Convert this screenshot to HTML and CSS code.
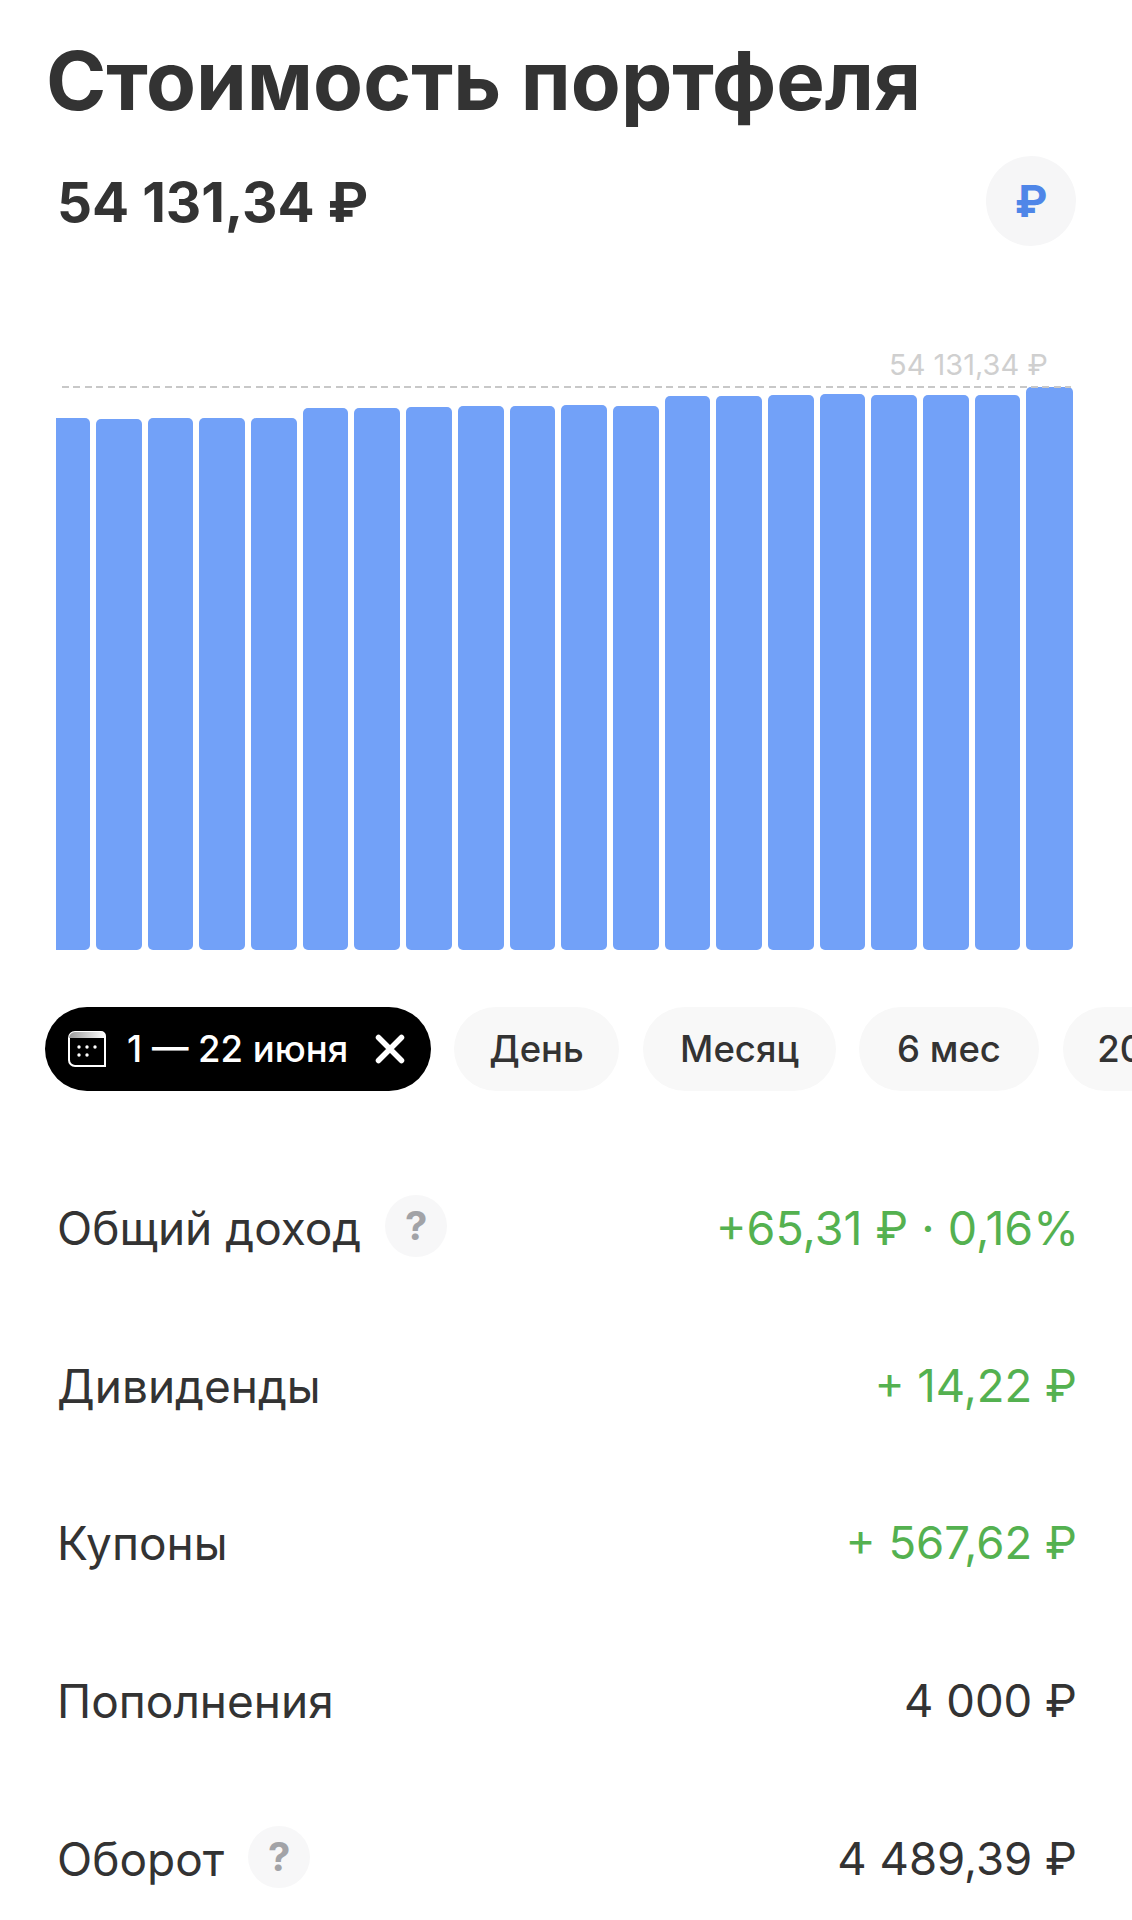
FILE: index.html
```html
<!DOCTYPE html>
<html lang="ru">
<head>
<meta charset="utf-8">
<title>Стоимость портфеля</title>
<link rel="stylesheet" href="styles.css">
</head>
<body>
<main class="page">
  <h1 class="title">Стоимость портфеля</h1>
  <div class="summary">
    <div class="amount">54 131,34 ₽</div>
    <div class="currency">₽</div>
  </div>
  <section class="chart">
    <div class="peak-label">54 131,34 ₽</div>
    <div class="peak-line"></div>
    <div class="bars">
      <div class="bar bar-first" style="height:532px"></div>
      <div class="bar" style="height:531px"></div>
      <div class="bar" style="height:532px"></div>
      <div class="bar" style="height:532px"></div>
      <div class="bar" style="height:532px"></div>
      <div class="bar" style="height:542px"></div>
      <div class="bar" style="height:542px"></div>
      <div class="bar" style="height:543px"></div>
      <div class="bar" style="height:544px"></div>
      <div class="bar" style="height:544px"></div>
      <div class="bar" style="height:545px"></div>
      <div class="bar" style="height:544px"></div>
      <div class="bar" style="height:554px"></div>
      <div class="bar" style="height:554px"></div>
      <div class="bar" style="height:555px"></div>
      <div class="bar" style="height:556px"></div>
      <div class="bar" style="height:555px"></div>
      <div class="bar" style="height:555px"></div>
      <div class="bar" style="height:555px"></div>
      <div class="bar bar-last" style="height:563px"></div>
    </div>
  </section>
  <nav class="chips">
    <div class="chip chip-active">
      <svg class="cal-icon" viewBox="0 0 38 36" aria-hidden="true">
        <defs>
          <linearGradient id="calTop" x1="0" y1="0" x2="1" y2="0">
            <stop offset="0" stop-color="#9a9a9a"/>
            <stop offset="1" stop-color="#ffffff"/>
          </linearGradient>
        </defs>
        <path d="M1 7V29a6 6 0 0 0 6 6H37V5a4 4 0 0 0-4-4H7A6 6 0 0 0 1 7Z" fill="#000" stroke="#fff" stroke-width="2"/>
        <path d="M1 7a6 6 0 0 1 6-6H33a4 4 0 0 1 4 4V7Z" fill="url(#calTop)"/>
        <g fill="#fff">
          <circle cx="11" cy="16" r="1.7"/><circle cx="19" cy="16" r="1.7"/><circle cx="27" cy="16" r="1.7"/>
          <circle cx="11" cy="24" r="1.7"/><circle cx="19" cy="24" r="1.7"/>
        </g>
      </svg>
      <span class="chip-label">1 — 22 июня</span>
      <svg class="close-icon" viewBox="0 0 30 30" aria-hidden="true">
        <path d="M3.5 3.5 26.5 26.5M26.5 3.5 3.5 26.5" stroke="#fff" stroke-width="5.5" stroke-linecap="round"/>
      </svg>
    </div>
    <div class="chip chip-day">День</div>
    <div class="chip chip-month">Месяц</div>
    <div class="chip chip-half">6 мес</div>
    <div class="chip chip-year">2023</div>
  </nav>
  <section class="rows">
    <div class="row">
      <div class="row-name">Общий доход <span class="hint">?</span></div>
      <div class="row-value positive row-value-wide">+65,31 ₽ · 0,16%</div>
    </div>
    <div class="row">
      <div class="row-name">Дивиденды</div>
      <div class="row-value positive">+ 14,22 ₽</div>
    </div>
    <div class="row">
      <div class="row-name">Купоны</div>
      <div class="row-value positive">+ 567,62 ₽</div>
    </div>
    <div class="row">
      <div class="row-name">Пополнения</div>
      <div class="row-value">4 000 ₽</div>
    </div>
    <div class="row">
      <div class="row-name">Оборот <span class="hint">?</span></div>
      <div class="row-value">4 489,39 ₽</div>
    </div>
  </section>
</main>
</body>
</html>
```
FILE: styles.css
```css
* { box-sizing: border-box; }
html, body { margin: 0; padding: 0; background: #fff; }
body { width: 1132px; height: 1920px; overflow: hidden; font-family: Inter, "Liberation Sans", sans-serif; color: #333; }
.page { display: flex; flex-direction: column; height: 1920px; overflow: hidden; }
.title { margin: 0; padding: 32px 0 0 46px; height: 155px; flex: none; font-size: 81.6px; line-height: 98px; font-weight: 700; color: #333; white-space: nowrap; }
.summary { display: flex; align-items: center; justify-content: space-between; height: 92px; flex: none; padding: 0 56px 0 57px; }
.amount { font-size: 54.9px; font-weight: 700; line-height: 62px; color: #333; margin-top: 2px; }
.currency { width: 90px; height: 90px; border-radius: 50%; background: #f6f6f7; color: #4f86e8; font-size: 44px; font-weight: 700; display: flex; align-items: center; justify-content: center; }
.chart { position: relative; height: 703px; flex: none; padding-left: 56px; display: flex; align-items: flex-end; }
.bars { display: flex; align-items: flex-end; gap: 6px; height: 600px; }
.bar { width: 45.7px; background: #72a1f8; border-radius: 5px; }
.bar-first { width: 34px; border-radius: 0 5px 5px 0; }
.bar-last { width: 46.5px; }
.peak-label { position: absolute; left: 889px; top: 101px; font-size: 29px; line-height: 34px; color: #cfcfcf; white-space: nowrap; }
.peak-line { position: absolute; left: 62px; top: 139px; width: 1009px; height: 2px; background: repeating-linear-gradient(90deg, #c8c8c8 0 7px, transparent 7px 11.4px); }
.chips { display: flex; gap: 24px; padding: 57px 0 0 45px; height: 141px; overflow: hidden; flex: none; }
.chip { flex: none; height: 84px; border-radius: 42px; background: #f8f8f8; display: flex; align-items: center; justify-content: center; font-size: 36.5px; font-weight: 500; color: #333; white-space: nowrap; }
.chip-active { width: 386px; background: #000; color: #fff; justify-content: flex-start; padding-left: 23px; }
.cal-icon { width: 38px; height: 36px; flex: none; margin-right: 21px; }
.chip-label { width: 248px; }
.close-icon { width: 30px; height: 30px; flex: none; }
.chip-day { width: 165px; margin-left: -1px; }
.chip-month { width: 193px; }
.chip-half { width: 180px; margin-left: -1px; }
.chip-year { width: 160px; }
.rows { display: flex; flex-direction: column; padding-top: 58px; flex: none; }
.row { height: 157.7px; flex: none; display: flex; align-items: center; justify-content: space-between; padding: 0 55px 0 57px; font-size: 46px; line-height: 56px; color: #333; }
.row-name { display: flex; align-items: center; gap: 24px; white-space: nowrap; }
.row-value { white-space: nowrap; font-size: 45.5px; }
.row-value-wide { font-size: 46.6px; margin-right: -2px; }
.positive { color: #54b150; }
.hint { width: 62px; height: 62px; flex: none; border-radius: 50%; background: #f7f7f8; color: #a2a3a7; font-size: 40px; font-weight: 700; display: flex; align-items: center; justify-content: center; margin-top: -4px; }
```
